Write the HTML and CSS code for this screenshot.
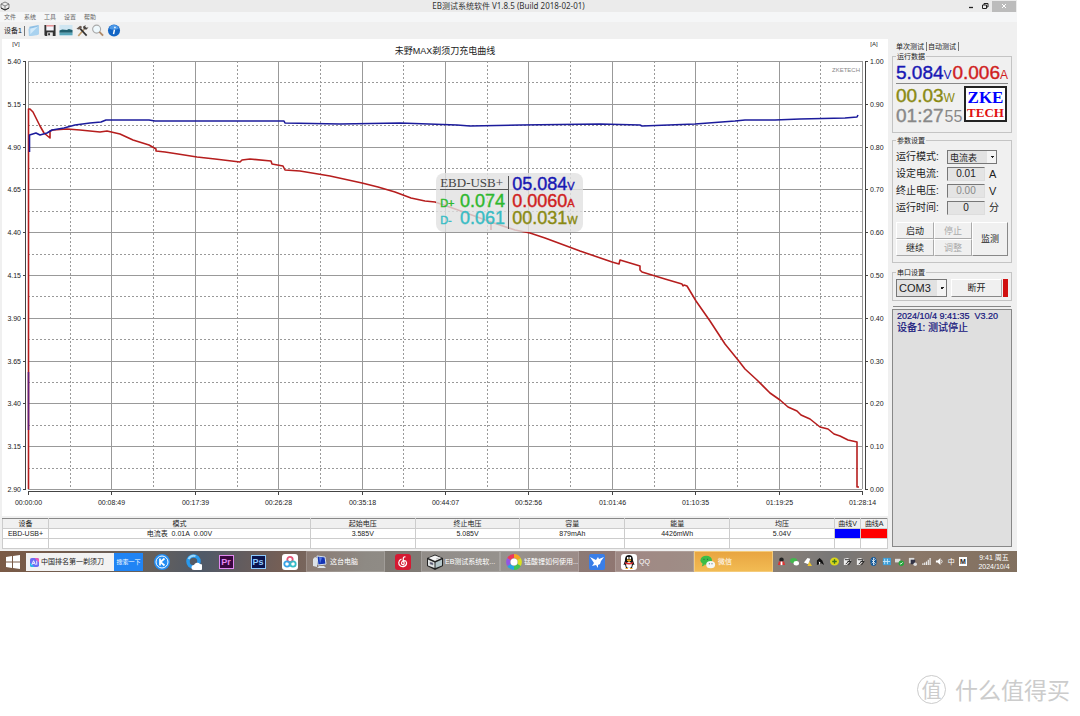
FILE: index.html
```html
<!DOCTYPE html>
<html lang="zh-CN">
<head>
<meta charset="utf-8">
<title>EB测试系统软件 V1.8.5</title>
<link rel="stylesheet" href="styles.css">
</head>
<body>
<div class="app">
  <header class="titlebar">
    <svg class="app-icon" viewBox="0 0 10 10"><path d="M1 3l4-2 4 2v4L5 9 1 7z" fill="#eee" stroke="#666" stroke-width=".8"/><path d="M1 3l4 2 4-2M5 5v4" fill="none" stroke="#666" stroke-width=".8"/><path d="M1 7l4 2 4-2" fill="none" stroke="#222"/></svg>
    <h1>EB测试系统软件 V1.8.5 (Build 2018-02-01)</h1>
    <div class="win-buttons">
      <button class="win" aria-label="最小化"><svg viewBox="0 0 8 8"><path d="M2 5.500h4" stroke="#222" stroke-width="1.300"/></svg></button>
      <button class="win" aria-label="还原"><svg viewBox="0 0 8 8"><path d="M3 3V1.500h4V5H5.500M1.500 3h4v3.500h-4z" fill="none" stroke="#222"/></svg></button>
      <button class="win close" aria-label="关闭"><svg viewBox="0 0 8 8"><path d="M2 2l4 4M6 2L2 6" stroke="#fff"/></svg></button>
    </div>
  </header>
  <nav class="menu">
    <button>文件</button><button>系统</button><button>工具</button><button>设置</button><button>帮助</button>
  </nav>
  <div class="toolbar">
    <span class="device">设备1</span>
    <button aria-label="打开"><svg viewBox="0 0 14 14"><path d="M2 3l10-2v10L2 13z" fill="#8fbfe4"/><path d="M1 5l9-1.500 2-2.500v10l-2 1-8.500 1z" fill="#a9d2ef"/><path d="M3 5l8-2-8 8z" fill="#d3eafa"/></svg></button>
    <button aria-label="保存"><svg viewBox="0 0 14 14"><path d="M1 1h12v12H2l-1-1z" fill="#333"/><path d="M3 1h8v6H3z" fill="#f4f4fa"/><path d="M3 2h8" stroke="#d55"/><path d="M4 9h6v4H4z" fill="#e6e6e6"/><path d="M5 10h2v2H5z" fill="#333"/></svg></button>
    <button aria-label="图片"><svg viewBox="0 0 14 14"><path d="M0 1h14v12H0z" fill="#cfe6f2"/><path d="M0 7l3-1 5 .5 2-1 4 1v3H0z" fill="#21606f"/><path d="M0 9.500h14V12H0z" fill="#58a5b8"/></svg></button>
    <button aria-label="工具"><svg viewBox="0 0 14 14"><path d="M3 13l6-7" stroke="#c09a68" stroke-width="1.800"/><path d="M12 12.500L5 5" stroke="#333" stroke-width="1.800"/><path d="M1 5l4-3 2 1-1 2-3 1z" fill="#6a5a50"/><path d="M8 3l3-2-.5 2L12 4l2-.5L12 6 9 6z" fill="#4c4642"/></svg></button>
    <button aria-label="缩放"><svg viewBox="0 0 14 14"><circle cx="5.500" cy="5.500" r="4.300" fill="#eef8fc" stroke="#aaa" stroke-width="1.200"/><path d="M8.500 8.500l4 4" stroke="#b08a68" stroke-width="2"/></svg></button>
    <button aria-label="关于"><svg viewBox="0 0 14 14"><circle cx="7" cy="7" r="6.500" fill="#1265c5"/><path d="M2 5a5 4 0 0 1 10 0q-5 2-10 0" fill="#4e9ae8"/><path d="M7.500 6L6.500 11M8 3v1.500" stroke="#fff" stroke-width="1.600"/></svg></button>
  </div>
  <main class="main">
    <section class="left">
      <div class="chart">
        <svg class="plot" viewBox="2 39 886 477" role="img" aria-label="充电曲线">
          <text x="445" y="54" class="plot-title">未野MAX剃须刀充电曲线</text>
          <text x="16" y="46" class="unit">[V]</text><text x="874" y="46" class="unit">[A]</text>
          <g id="grid"></g>
          <text x="846" y="72" class="brand">ZKETECH</text>
          <path class="red" d="M28.500 489V109L30 109 33 112 40 126 44 133 50 138V131L53 130 67 129 80 130 100 132 107 131 120 134 133 140 149 145 156 149V151L165 152 178 154 197 157 215 159 240 162 242 160 250 159 271 161 272 164 283 166 285 170 300 171 330 176 362 183 378 187 395 192 411 198 425 201 435 202 458 210 491 222V230M491 222L515 230 530 233 545 238 580 251 612 262 619 264 620 260 640 266V270L642 272 665 279 682 284 683 286 684 285 687 286 696 301 710 321 725 344 738 360 745 369 757 380 770 393 780 400 788 407 797 411 801 415 810 419 820 427 828 429 834 434 840 436 848 440 857 442V487H859"/>
          <path class="blue" d="M29.500 152V135L36 133 40 135 47 133 52 130 64 128 75 125 90 123 101 122 106 120H149L155 121H190L284 121 285 123 340 124 400 123 457 125 470 126 520 125 600 124 640 125 642 126 695 124 735 121 745 120 775 120 800 119 845 118 857 117 858 115"/>
          <path class="violet" d="M28.500 430V372"/>
        </svg>
        <div class="overlay">
          <div class="ov-left">
            <div class="ov-name">EBD-USB+</div>
            <div class="ov-row green"><span>D+</span><b>0.074</b></div>
            <div class="ov-row cyan"><span>D-</span><b>0.061</b></div>
          </div>
          <div class="ov-right">
            <div class="ov-row navy"><b>05.084</b><span>V</span></div>
            <div class="ov-row crimson"><b>0.0060</b><span>A</span></div>
            <div class="ov-row olive"><b>00.031</b><span>W</span></div>
          </div>
        </div>
      </div>
      <table class="results">
        <colgroup><col class="c-dev"><col class="c-mode"><col class="c-val"><col class="c-val"><col class="c-val"><col class="c-val"><col class="c-val"><col class="c-line"><col class="c-line"></colgroup>
        <thead><tr><th>设备</th><th>模式</th><th>起始电压</th><th>终止电压</th><th>容量</th><th>能量</th><th>均压</th><th>曲线V</th><th>曲线A</th></tr></thead>
        <tbody>
          <tr><td>EBD-USB+</td><td>电流表&nbsp; 0.01A&nbsp; 0.00V</td><td>3.585V</td><td>5.085V</td><td>879mAh</td><td>4426mWh</td><td>5.04V</td><td class="swatch-v"></td><td class="swatch-a"></td></tr>
          <tr><td></td><td></td><td></td><td></td><td></td><td></td><td></td><td></td><td></td></tr>
        </tbody>
      </table>
    </section>
    <aside class="side">
      <div class="tabs"><button class="active">单次测试</button><button>自动测试</button></div>
      <fieldset class="run">
        <legend>运行数据</legend>
        <div class="readout top"><span class="navy"><b>5.084</b>V</span><span class="crimson"><b>0.006</b>A</span></div>
        <div class="run-lower">
          <div><div class="readout olive"><b>00.03</b>W</div><div class="readout gray"><b>01:27</b><i>55</i></div></div>
          <div class="logo"><span>ZKE</span><span>TECH</span></div>
        </div>
      </fieldset>
      <fieldset class="params">
        <legend>参数设置</legend>
        <div class="fields">
          <label for="mode">运行模式:</label><select id="mode"><option>电流表</option></select>
          <label for="cur">设定电流:</label><input id="cur" value="0.01"><span>A</span>
          <label for="vol">终止电压:</label><input id="vol" value="0.00" disabled><span>V</span>
          <label for="time">运行时间:</label><input id="time" value="0"><span class="minute">分</span>
        </div>
        <div class="actions">
          <button>启动</button><button disabled>停止</button><button class="tall">监测</button>
          <button>继续</button><button disabled>调整</button>
        </div>
      </fieldset>
      <fieldset class="port">
        <legend>串口设置</legend>
        <div class="port-row">
          <select aria-label="串口"><option>COM3</option></select>
          <button>断开</button><span class="status"></span>
        </div>
      </fieldset>
      <div class="log"><p>2024/10/4 9:41:35&nbsp; V3.20</p><p class="big">设备1: 测试停止</p></div>
    </aside>
  </main>
  <footer class="taskbar">
    <button class="start" aria-label="开始"><svg viewBox="0 0 14 14"><path d="M0 2l6-1v5.500H0zM7 1l7-1v6.500H7zM0 7.500h6V13l-6-1zM7 7.500h7V14l-7-1z" fill="#fff"/></svg></button>
    <div class="search">
      <svg viewBox="0 0 10 10"><rect width="10" height="10" rx="2" fill="#6b6df5"/><path d="M5 0h3a2 2 0 0 1 2 2v3z" fill="#ee5bb5"/><path d="M0 5v3a2 2 0 0 0 2 2h3z" fill="#28b9ec"/><path d="M2 7.500L4 3l2 4.500M3 6h2M7.500 3v4.500" stroke="#fff" fill="none"/></svg>
      <input value="中国排名第一剃须刀" aria-label="搜索"><button>搜索一下</button>
    </div>
    <button class="pin" aria-label="K"><svg viewBox="0 0 16 16"><circle cx="8" cy="8" r="8" fill="#238df2"/><circle cx="8" cy="8" r="6" fill="none" stroke="#fff"/><path d="M6 4.500v7M10.500 4.500L6.500 8l4 3.500" fill="none" stroke="#fff" stroke-width="1.700"/></svg></button>
    <button class="pin" aria-label="浏览器"><svg viewBox="0 0 16 16"><circle cx="7.500" cy="7.500" r="5.500" fill="none" stroke="#2899ed" stroke-width="3.500"/><path d="M2.500 5a6 6 0 0 1 7-3" stroke="#9ad8fb" stroke-width="2" fill="none"/><path d="M8 16a2.500 2.500 0 0 1 0-5 3.500 3.500 0 0 1 6-1 3 3 0 0 1 0 6z" fill="#fff"/></svg></button>
    <button class="pin"><span class="adobe pr">Pr</span></button>
    <button class="pin"><span class="adobe ps">Ps</span></button>
    <button class="pin" aria-label="网盘"><svg viewBox="0 0 16 16"><rect width="16" height="16" rx="3" fill="#fff"/><g fill="none" stroke-width="1.800"><circle cx="8" cy="5.500" r="2.700" stroke="#e65577"/><circle cx="5" cy="10" r="2.700" stroke="#38a4e8"/><circle cx="11" cy="10" r="2.700" stroke="#36bdc8"/></g></svg></button>
    <button class="task"><svg viewBox="0 0 16 16"><path d="M5 2l8 1 1 7-8 1z" fill="#1434b6" stroke="#d7e2ec"/><path d="M7 3l3 .5-2 6z" fill="#5579e2"/><path d="M3 3L1 5v7l4 1V4zM7 12h5l2 2H5z" fill="#dce2e8"/></svg>这台电脑</button>
    <button class="pin wide" aria-label="音乐"><svg viewBox="0 0 16 16"><rect width="16" height="16" rx="3" fill="#d51932"/><path d="M10.500 3C8 2 8 5 8.500 7l.6 2c.5 2.500-3 2-2.500-.3C7 6 11 6 11.500 8.500 12 12 8 13.500 5.500 12S3 6.500 6.500 5" fill="none" stroke="#fff" stroke-width="1.200"/></svg></button>
    <button class="task"><svg viewBox="0 0 16 16"><path d="M0 4l8-3.500L16 4v8l-8 4-8-4z" fill="#222"/><path d="M1.500 4L8 1.500 14.500 4 8 7z" fill="#f5f5f5"/><path d="M1 5.500l6.500 3V14L1 11.500z" fill="#e2e6e7"/><path d="M8.500 8.500l6.500-3v6L8.500 14z" fill="#b5c6ca"/><path d="M3 8l3 1v2l-3-1zM9 5l3-1" fill="#557" stroke="#888" stroke-width=".5"/></svg>EB测试系统软...</button>
    <button class="task"><svg viewBox="0 0 16 16" fill="none" stroke-width="4"><path d="M8 2a6 6 0 0 1 5 3" stroke="#f5a623"/><path d="M13 5a6 6 0 0 1 0 6" stroke="#d9e021"/><path d="M13 11a6 6 0 0 1-5 3" stroke="#40c553"/><path d="M8 14a6 6 0 0 1-5-3" stroke="#24a6e5"/><path d="M3 11a6 6 0 0 1 0-6" stroke="#9355e5"/><path d="M3 5a6 6 0 0 1 5-3" stroke="#ed375d"/><circle cx="8" cy="8" r="3.500" fill="#fff" stroke="none"/></svg>锰酸锂如何使用...</button>
    <button class="pin wide" aria-label="迅雷"><svg viewBox="0 0 16 16"><rect width="16" height="16" rx="2" fill="#397ee8"/><path d="M1 3l6 3 2-3 1 2 5-2-3 4-1 3-2 1v3l-2-3-4 1 2-3z" fill="#fff"/></svg></button>
    <button class="task"><svg viewBox="0 0 16 16"><rect width="16" height="16" rx="3" fill="#fff"/><path d="M8 1C4.500 1 4 4 4 6.500L2.500 11l1.500-.5L5 14h6l1-3.500 1.500.5L12 6.500C12 4 11.500 1 8 1" fill="#151515"/><ellipse cx="8" cy="11" rx="2.800" ry="3" fill="#fff"/><path d="M4 8q4 2 8 0v1.500q-4 2-8 0z" fill="#e3292d"/><path d="M6 6h4L8 7.500zM4.500 14.500h2.500M9 14.500h2.500" fill="#f9ae26" stroke="#f9ae26"/><path d="M6 4h1.500M8.500 4h1.500" stroke="#fff" stroke-width="2"/></svg>QQ</button>
    <button class="task alert"><svg viewBox="0 0 18 16"><ellipse cx="7" cy="6" rx="6.500" ry="5" fill="#3bbd46"/><path d="M3 10l-1 3 4-2z" fill="#3bbd46"/><ellipse cx="12" cy="11" rx="5" ry="4" fill="#f4f7f4"/><path d="M4 5h1M8 5h1M10 10h1M13 10h1" stroke="#245" stroke-width="1"/></svg>微信</button>
    <div class="tray">
      <svg viewBox="0 0 10 10"><circle cx="5" cy="3" r="2.500" fill="#222"/><path d="M2 5h6l1 4H1z" fill="#d33"/><path d="M4 5h2v4H4z" fill="#fff"/></svg>
      <svg viewBox="0 0 10 10"><ellipse cx="4" cy="4" rx="4" ry="3" fill="#43b84e"/><ellipse cx="7" cy="7" rx="3" ry="2.500" fill="#fff"/></svg>
      <svg viewBox="0 0 10 10"><path d="M1 6l4-5 3 1-2 6z" fill="#fff"/><path d="M7 5l3 5H5z" fill="#ecc52e"/></svg>
      <svg viewBox="0 0 10 10"><path d="M1 9V4l3-3 3 3 2 5-3-2z" fill="#111"/><path d="M3 5l2 1-1 3z" fill="#fff"/></svg>
      <svg viewBox="0 0 10 10"><ellipse cx="5" cy="5" rx="5" ry="4.500" fill="#d8d51a"/><path d="M5 2.500v5M2.500 5h5" stroke="#36731d" stroke-width="1.500"/></svg>
      <svg viewBox="0 0 10 10"><path d="M1 2l4-1 4 2-5 6H1z" fill="#eee"/><path d="M2 3h6L3 8m2-3h4L6 9" stroke="#222" fill="none"/></svg>
      <svg viewBox="0 0 10 10"><path d="M1 2l4-1 4 2-5 6H1z" fill="#eee"/><path d="M2 3h6L3 8m2-3h4L6 9" stroke="#222" fill="none"/></svg>
      <svg viewBox="0 0 10 10"><ellipse cx="5" cy="5" rx="3.500" ry="5" fill="#125899"/><path d="M3 3l4 4-2 2V1l2 2-4 4" stroke="#fff" fill="none" stroke-width=".8"/></svg>
      <svg viewBox="0 0 10 10"><path d="M1 1h9v8H1z" fill="#3d9ed8"/><path d="M3 2v6M6 2v6M1 5h8" stroke="#c8e9fa"/></svg>
      <svg viewBox="0 0 10 10"><path d="M0 2h6v4H0z" fill="#ddd"/><circle cx="7" cy="7" r="3" fill="#26a63b"/><path d="M5.500 7l1 1 2-2" stroke="#fff" fill="none"/></svg>
      <svg viewBox="0 0 10 10"><path d="M1 1h6v6H1z" fill="#ddd"/><path d="M3 3h5v5H3z" fill="#334"/><circle cx="8" cy="8" r="2" fill="#ddd"/></svg>
      <svg viewBox="0 0 10 10"><path d="M1 9V7M3 9V6M5 9V5M7 9V3M9 9V1" stroke="#eee" stroke-width="1.300"/></svg>
      <svg viewBox="0 0 10 10"><path d="M1 4h2l3-3v8L3 6H1z" fill="#fff"/><path d="M7 3q2 2 0 4" stroke="#eee" fill="none"/></svg>
      <span>中</span><span class="ime">M</span>
    </div>
    <div class="clock"><span>9:41 周五</span><span>2024/10/4</span></div>
  </footer>
</div>
<div class="watermark"><span class="seal">值</span><span>什么值得买</span></div>
<script src="chart.js"></script>
</body>
</html>
```
FILE: styles.css
```css
* { box-sizing: border-box; }
body {
  margin: 0;
  min-height: 100vh;
  display: flex;
  flex-direction: column;
  justify-content: space-between;
  background: #fff;
  color: #222;
  font: 8px/10px "Liberation Sans", "Noto Sans CJK SC", sans-serif;
}
button, input, select { font: inherit; color: inherit; margin: 0; padding: 0; border: 0; background: none; border-radius: 0; }
svg { display: block; }
h1, p { margin: 0; }
.app { margin-right: 63px; background: #f0f0f0; }

.titlebar { display: grid; grid-template-columns: 1fr auto 1fr; align-items: center; height: 12px; background: #ebebeb; }
.titlebar h1 { font: 400 8px/12px "Noto Sans", "Noto Sans CJK SC", sans-serif; color: #333; }
.app-icon { width: 10px; height: 10px; }
.win-buttons { display: flex; justify-content: flex-end; padding-right: 1px; }
.win { width: 14px; height: 11px; display: grid; place-items: center; }
.win svg { width: 8px; height: 8px; }
.close { width: 24px; background: #bcbcbc; }

.menu { display: flex; gap: 8px; padding: 0 4px; height: 10px; background: #f5f6f7; color: #666; }
.menu button { font-size: 6px; line-height: 10px; }
.toolbar { display: flex; align-items: center; gap: 2px; height: 17px; padding-left: 4px; }
.device { font-size: 7px; border-right: 1px solid #777; padding-right: 2px; }
.toolbar button { width: 14px; }
.toolbar button svg { width: 14px; height: 13px; }

.main { display: grid; grid-template-columns: minmax(0, 1fr) 120px; gap: 4px; padding: 0 5px 2px 2px; }
.left { display: flex; flex-direction: column; gap: 2px; }
.chart { position: relative; background: #fff; }
.plot { width: 100%; height: auto; }
.plot text { font-family: "Liberation Sans", "Noto Sans CJK SC", sans-serif; font-size: 7px; fill: #222; text-anchor: middle; }
.plot .plot-title { font-size: 9px; }
.plot .unit { font-size: 6px; }
.plot .brand { fill: #888; font-size: 6px; }
.plot .y-left { text-anchor: end; }
.plot .y-right { text-anchor: start; }
.solid { stroke: #999; stroke-width: 1; shape-rendering: crispEdges; }
.dashed { stroke: #999; stroke-width: 1; stroke-dasharray: 2 2; shape-rendering: crispEdges; }
.axis { stroke: #444; fill: none; shape-rendering: crispEdges; }
.red, .blue, .violet { fill: none; stroke-linejoin: round; }
.red { stroke: #b61e1e; stroke-width: 1.6px; }
.blue { stroke: #1c1c9c; stroke-width: 1.6px; }
.violet { stroke: #61207c; stroke-width: 1.6px; }

/* Live readout floating over the plot */
.overlay {
  position: absolute;
  left: 49%;
  top: 28%;
  display: flex;
  width: 147px;
  height: 59px;
  padding: 3px 4px;
  border-radius: 8px;
  background: rgba(225, 225, 225, .8);
}
.ov-left { width: 69px; border-right: 1px solid #555; }
.ov-left .ov-row { justify-content: space-between; padding-right: 3px; }
.ov-right { padding-left: 3px; }
.ov-name { font: 13px/14px "Liberation Serif", serif; color: #444; border-bottom: 1px solid #555; height: 14px; margin-bottom: 3px; white-space: nowrap; }
.ov-row { display: flex; align-items: baseline; height: 17px; font-size: 11px; line-height: 17px; font-weight: 400; }
.ov-row b { font-size: 18px; font-weight: 400; -webkit-text-stroke: .4px; }
.ov-row span { -webkit-text-stroke: .4px; }
.green { color: #2eb82e; }
.cyan { color: #38bcc4; }
.navy { color: #1818b4; }
.crimson { color: #d01e1e; }
.olive { color: #8a8a12; }
.gray { color: #888; }

.results { width: 100%; table-layout: fixed; border-collapse: collapse; background: #fff; border: 1px solid #888; }
.results th, .results td { height: 10px; padding: 0; border: 1px solid #ccc; text-align: center; font-size: 7px; line-height: 9px; font-weight: 400; white-space: nowrap; }
.results tr:first-child th { border-top-color: #888; }
.results th { background: #f0f0f0; }
.c-dev { width: 5.2%; }
.c-mode { width: 29.6%; }
.c-val { width: 11.85%; }
.c-line { width: 3%; }
.results .swatch-v { background: #00f; }
.results .swatch-a { background: #f00; }

.side { display: flex; flex-direction: column; }
.tabs { display: flex; height: 14px; padding-left: 3px; align-items: center; }
.tabs button { font-size: 7px; padding: 0 2px 0 1px; border-right: 1px solid #777; line-height: 9px; }
fieldset { margin: 0; min-width: 0; border: 1px solid #c4c4c4; padding: 0 3px; }
legend { margin-left: 0; padding: 0 1px; font-size: 7px; line-height: 7px; }
.run { height: 80px; margin-bottom: 4px; }
.readout { display: flex; align-items: baseline; height: 20px; font-size: 12px; line-height: 20px; }
.readout b { font-size: 19px; font-weight: 400; -webkit-text-stroke: .4px; }
.readout i { font-size: 16px; font-style: normal; padding-left: 1px; }
.top { justify-content: space-between; height: 24px; line-height: 26px; border-bottom: 1px solid #888; }
.run-lower { display: flex; justify-content: space-between; padding: 2px 1px 0 0; }
.logo { width: 43px; height: 36px; border: 2px solid #222; display: flex; flex-direction: column; align-items: center; justify-content: center; background: #fff; font: 700 17px/17px "Liberation Serif", serif; color: #00f; }
.logo span + span { font-size: 13px; line-height: 14px; color: #e01010; }

.params { padding-bottom: 6px; margin-bottom: 6px; }
.fields { display: grid; grid-template-columns: 47px 38px 1fr; column-gap: 4px; row-gap: 3px; padding-top: 6px; align-items: center; font-size: 11px; line-height: 14px; }
.fields label { white-space: nowrap; font-size: 10px; }
.fields .minute { font-size: 10px; }
.fields select { grid-column: 2 / 4; width: 50px; }
.fields input { width: 100%; height: 14px; text-align: center; font-size: 10px; background: #e4e4e4; border: 1px solid; border-color: #777 #ddd #ddd #777; }
.fields input:disabled { color: #888; }
select {
  appearance: none;
  height: 14px;
  font-size: 9px;
  padding-left: 2px;
  border: 1px solid #777;
  background: conic-gradient(from -45deg at 50% 100%, #222 90deg, transparent 0) right 2px center / 4px 2px no-repeat, linear-gradient(#f4f4f4, #f4f4f4) right / 9px 100% no-repeat, #e2e2e2;
}
.actions { display: grid; grid-template-columns: 38px 38px 1fr; grid-auto-rows: 17px; padding-top: 7px; }
.actions button, .port-row button { font-size: 9px; border: 1px solid; border-color: #fff #aaa #aaa #fff; }
.actions button:disabled { color: #aaa; }
.actions .tall { grid-row: span 2; border-color: #fff #888 #888 #fff; }
.port { padding-bottom: 3px; }
.port-row { display: grid; grid-template-columns: 51px 1fr 5px; gap: 1px; padding-top: 3px; }
.port-row > * { height: 18px; }
.port-row select { font-size: 11px; }
.port-row button { margin-left: 3px; border-bottom-color: #888; }
.status { background: #d01010; }
.log { flex: 1; margin: 8px 0 2px; border: 1px solid #888; box-shadow: 0 -3px 0 -1px #f0f0f0, 0 -4px 0 -1px #888; background: #dfdfdf; padding: 1px 4px; color: #14147c; }
.log p { font-size: 9px; line-height: 11px; white-space: nowrap; -webkit-text-stroke: .2px; }
.log .big { font-size: 10px; }

.taskbar {
  display: flex;
  align-items: stretch;
  height: 21px;
  color: #fff;
  font-size: 7px;
  background: linear-gradient(100deg, #7b5a45, #65605c 15%, #505967 20%, #765f55 28%, #7c7770 36%, #85807c 50%, #917570 62%, #8e8277 74%, #777 82%, #8a7768 90%, #81705f);
}
.start { width: 26px; display: grid; place-items: center; flex: none; }
.start svg { width: 14px; height: 14px; }
.search { display: flex; align-items: center; width: 117px; height: 18px; margin: 2px 3px 0 0; background: #f2f2f2; color: #222; flex: none; }
.search svg { width: 9px; height: 9px; margin: 0 2px 0 4px; flex: none; }
.search input { width: 73px; font-size: 7px; }
.search button { width: 29px; height: 18px; background: #2084f4; color: #fff; font-size: 6px; flex: none; }
.pin { width: 32px; display: grid; place-items: center; flex: none; }
.pin svg { width: 16px; height: 16px; }
.wide { width: 36px; }
.adobe { width: 15px; height: 14px; border: 1px solid; font: 700 9px/12px "Liberation Sans", sans-serif; }
.pr { background: #3a0740; color: #e389f2; }
.ps { background: #08144f; color: #8ecbff; }
.task { display: flex; align-items: center; gap: 2px; width: 79px; padding-left: 5px; background: rgba(255, 255, 255, .14); border: 1px solid rgba(255, 255, 255, .16); white-space: nowrap; overflow: hidden; flex: none; }
.task svg { width: 16px; height: 16px; flex: none; }
.alert { background: linear-gradient(#e8a541, #f2bb53); border-color: #f4cb7b; }
.tray { display: flex; align-items: center; justify-content: space-between; flex: 1; padding: 0 4px; min-width: 0; }
.tray svg { width: 9px; height: 9px; }
.ime { border: 1px solid #fff; background: #fff; color: #222; width: 8px; line-height: 7px; text-align: center; font-weight: 700; }
.clock { display: flex; flex-direction: column; align-items: center; justify-content: center; line-height: 9px; width: 46px; flex: none; }

.watermark { display: flex; align-items: center; justify-content: flex-end; gap: 9px; padding: 0 10px 11px 0; color: #ccc; font: 23px/32px "Noto Sans CJK SC", sans-serif; }
.seal { width: 29px; height: 29px; border: 1px solid #ccc; border-radius: 50%; text-align: center; font-size: 20px; line-height: 27px; }
```
FILE: chart.js
```js
// Builds the grid, axes and tick labels of the plot.
const grid = document.getElementById('grid');
const left = 28, right = 862, top0 = 61, bottom = 489;
const times = ['00:00:00', '00:08:49', '00:17:39', '00:26:28', '00:35:18', '00:44:07',
  '00:52:56', '01:01:46', '01:10:35', '01:19:25', '01:28:14'];

function add(tag, attrs, text) {
  const el = document.createElementNS('http://www.w3.org/2000/svg', tag);
  for (const key in attrs) el.setAttribute(key, attrs[key]);
  if (text) el.textContent = text;
  grid.appendChild(el);
}

for (let i = 0; i <= 20; i++) {
  const x = Math.round(left + (right - left) * i / 20) + 0.5;
  const y = Math.round(top0 + (bottom - top0) * i / 20) + 0.5;
  const cls = i % 2 ? 'dashed' : 'solid';
  add('path', { class: cls, d: `M${x} ${top0}V${bottom}` });
  add('path', { class: cls, d: `M${left} ${y}H${right}` });
  if (i % 2 === 0) {
    const n = i / 2;
    add('path', { class: 'axis', d: `M${x} 491v4M23 ${y}h3M865 ${y}h3` });
    add('text', { x: x, y: 505 }, times[n]);
    add('text', { x: 21, y: y + 2, class: 'y-left' }, (5.4 - 0.25 * n).toFixed(2));
    add('text', { x: 870, y: y + 2, class: 'y-right' }, (1 - 0.1 * n).toFixed(2));
  }
}
add('path', { class: 'axis', d: 'M25.5 61V489M865.5 61V489M28 491.5H863' });
```
